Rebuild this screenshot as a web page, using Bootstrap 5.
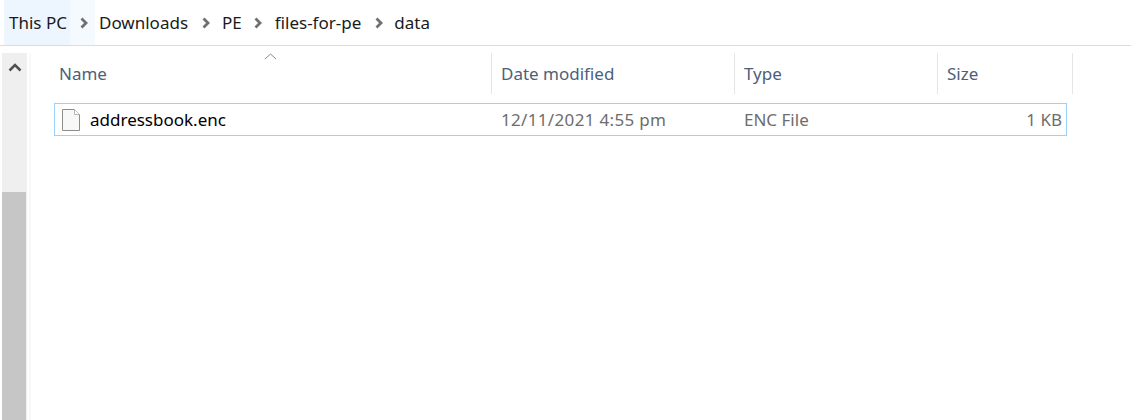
<!DOCTYPE html>
<html lang="en">
<head>
<meta charset="utf-8">
<title>data</title>
<link href="https://cdn.jsdelivr.net/npm/bootstrap@5.3.0/dist/css/bootstrap.min.css" rel="stylesheet">
<style>
html,body{height:420px;overflow:hidden;background:#fff;}
body{font-family:"Noto Sans",sans-serif;font-size:17px;color:#1a1a1a;}
.crumbbar{height:46px;border-bottom:1px solid #dcdcdc;padding-left:4px;}
.crumb-first{width:91px;height:45px;background:linear-gradient(90deg,#edf6fe 0,#edf6fe 66px,#f5faff 66px);padding-left:5px;}
.crumb-first span{width:71px;}
.crumb-item{line-height:1;}
.sep{width:8px;height:12px;flex:none;}
.m-a{margin-left:4px}.m-b{margin-left:14px}.m-c{margin-left:12px}.m-d{margin-left:11px}.m-e{margin-left:13px}
.explorer{height:374px;}
.vscroll{width:25px;margin:7px 0 0 2px;background:#efefef;flex:none;}
.vscroll-top{height:139px;padding-top:10px;}
.vthumb{background:#c6c6c6;width:24px;}
.vstrip{width:2px;background:#f8f8f8;margin:7px 0 0 2px;flex:none;}
.listing{position:relative;flex:1;}
.sort-caret{position:absolute;left:233px;top:7px;}
.headrow{height:41px;margin-top:7px;color:#4c607a;}
.hcell{border-right:1px solid #e5e5e5;padding-left:9px;display:flex;align-items:center;height:41px;}
.w-name{width:461px;padding-left:28px;}
.w-date{width:243px;}
.w-type{width:203px;}
.w-size{width:135px;}
.filerow{height:33px;margin:9px 0 0 23px;width:1013px;border:1px solid #99d1ff;}
.fc{display:flex;align-items:center;height:31px;padding-top:1px;}
.fc-name{width:437px;padding-left:7px;color:#000;}
.fc-date{width:243px;padding-left:9px;color:#6d6d6d;letter-spacing:.33px;}
.fc-type{width:203px;padding-left:9px;color:#6d6d6d;}
.fc-size{flex:1;justify-content:flex-end;padding-right:4px;color:#6d6d6d;}
.fname{margin-left:10px;}
</style>
</head>
<body>
<div class="crumbbar d-flex align-items-center">
  <div class="crumb-first d-flex align-items-center"><span class="text-nowrap">This PC</span><svg class="sep" viewBox="0 0 8 12"><path d="M1.500 1.500 6 6l-4.500 4.500" fill="none" stroke="#707070" stroke-width="2.800"/></svg></div>
  <span class="crumb-item m-a">Downloads</span>
  <svg class="sep m-b" viewBox="0 0 8 12"><path d="M1.500 1.500 6 6l-4.500 4.500" fill="none" stroke="#707070" stroke-width="2.800"/></svg>
  <span class="crumb-item m-c">PE</span>
  <svg class="sep m-c" viewBox="0 0 8 12"><path d="M1.500 1.500 6 6l-4.500 4.500" fill="none" stroke="#707070" stroke-width="2.800"/></svg>
  <span class="crumb-item m-e">files-for-pe</span>
  <svg class="sep m-b" viewBox="0 0 8 12"><path d="M1.500 1.500 6 6l-4.500 4.500" fill="none" stroke="#707070" stroke-width="2.800"/></svg>
  <span class="crumb-item m-d">data</span>
</div>
<div class="explorer d-flex">
  <div class="vscroll d-flex flex-column">
    <div class="vscroll-top d-flex justify-content-center"><svg width="14" height="9" viewBox="0 0 14 9"><path d="M1.500 7.500 7 2l5.500 5.500" fill="none" stroke="#505050" stroke-width="2.500"/></svg></div>
    <div class="vthumb flex-grow-1"></div>
  </div>
  <div class="vstrip"></div>
  <div class="listing">
    <svg class="sort-caret" width="13" height="7" viewBox="0 0 13 7"><path d="M1 6 6.500 1 12 6" fill="none" stroke="#8a8a8a"/></svg>
    <div class="headrow d-flex">
      <div class="hcell w-name">Name</div>
      <div class="hcell w-date">Date modified</div>
      <div class="hcell w-type">Type</div>
      <div class="hcell w-size">Size</div>
    </div>
    <div class="filerow d-flex">
      <div class="fc fc-name">
        <svg width="18" height="22" viewBox="0 0 18 22"><path d="M.5.500h12l5 5v16H.5z" fill="#f8f8f8" stroke="#8c8c8c"/><path d="M12.500.500v5h5" fill="#fff" stroke="#b5b5b5"/></svg>
        <span class="fname">addressbook.enc</span>
      </div>
      <div class="fc fc-date">12/11/2021 4:55 pm</div>
      <div class="fc fc-type">ENC File</div>
      <div class="fc fc-size">1 KB</div>
    </div>
  </div>
</div>
<script src="https://cdn.jsdelivr.net/npm/bootstrap@5.3.0/dist/js/bootstrap.bundle.min.js"></script>
</body>
</html>
